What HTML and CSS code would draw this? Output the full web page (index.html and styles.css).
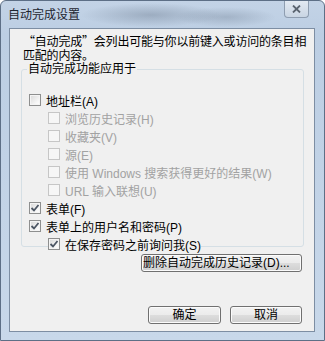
FILE: index.html
```html
<!DOCTYPE html>
<html lang="zh-CN">
<head>
    <meta charset="UTF-8">
    <meta name="viewport" content="width=device-width, initial-scale=1.0">
    <title>自动完成设置</title>
    <link rel="stylesheet" href="styles.css">
</head>
<body>
    <div class="window">
        <div class="titlebar">
            <span class="title">自动完成设置</span>
            <span class="close">
                <svg width="9" height="8" viewBox="0 0 9 8"><path d="M1 0.5 L8 7.5 M8 0.5 L1 7.5" stroke="#5a6470" stroke-width="1.8"/></svg>
            </span>
        </div>
        <div class="client">
            <p class="intro">“自动完成”会列出可能与你以前键入或访问的条目相匹配的内容。</p>
            <fieldset class="group">
                <legend>自动完成功能应用于</legend>
                <div class="opt"><span class="cb"></span>地址栏(A)</div>
                <div class="opt sub off"><span class="cb"></span>浏览历史记录(H)</div>
                <div class="opt sub off"><span class="cb"></span>收藏夹(V)</div>
                <div class="opt sub off"><span class="cb"></span>源(E)</div>
                <div class="opt sub off"><span class="cb"></span>使用 Windows 搜索获得更好的结果(W)</div>
                <div class="opt sub off"><span class="cb"></span>URL 输入联想(U)</div>
                <div class="opt"><span class="cb on"></span>表单(F)</div>
                <div class="opt"><span class="cb on"></span>表单上的用户名和密码(P)</div>
                <div class="opt sub"><span class="cb on"></span>在保存密码之前询问我(S)</div>
            </fieldset>
            <div class="clear-row">
                <button class="btn wide">删除自动完成历史记录(D)...</button>
            </div>
            <div class="actions">
                <button class="btn ok">确定</button>
                <button class="btn cancel">取消</button>
            </div>
        </div>
    </div>
</body>
</html>
```

FILE: styles.css
```css
* {
    margin: 0;
    padding: 0;
    box-sizing: border-box;
}
body {
    width: 325px;
    height: 341px;
    overflow: hidden;
    font-family: "Liberation Sans", "Noto Sans CJK SC", sans-serif;
    font-size: 12px;
    color: #000;
}
.window {
    width: 325px;
    height: 341px;
    display: flex;
    flex-direction: column;
    padding: 0 9px 8px 8px;
    border: 1px solid #5d6f86;
    border-radius: 6px 6px 0 0;
    background:
        radial-gradient(ellipse 70px 12px at 150px 14px, rgba(90, 105, 125, 0.35), transparent),
        radial-gradient(ellipse 50px 10px at 225px 16px, rgba(95, 110, 130, 0.3), transparent),
        linear-gradient(to bottom, #c3d3e6 0%, #bccee3 10%, #c8d8ea 100%);
}
.titlebar {
    height: 27px;
    display: flex;
    align-items: flex-start;
    justify-content: space-between;
}
.title {
    font-family: "Noto Sans CJK SC", sans-serif;
    line-height: 14px;
    margin-top: 6px;
    margin-left: -1px;
    color: #1e2530;
}
.close {
    width: 25px;
    height: 17px;
    margin-right: 6px;
    display: flex;
    align-items: center;
    justify-content: center;
    border: 1px solid #8e9db0;
    border-top: none;
    border-radius: 0 0 4px 4px;
    background: linear-gradient(to bottom, #e2e9f2, #c9d5e3);
}
.client {
    flex: 1;
    display: flex;
    flex-direction: column;
    background: #f0f0f0;
    border: 1px solid #7d8ea3;
}
.intro {
    font-family: "Noto Sans CJK SC", sans-serif;
    margin: 5px 4px 0 13px;
    line-height: 14px;
    letter-spacing: -0.2px;
}
.group {
    margin: 0 10px 0 11px;
    height: 185px;
    padding: 15px 4px 0 5px;
    border: 1px solid #d5dfe5;
    border-radius: 3px;
}
.group legend {
    padding: 0 1px;
    line-height: 14px;
}
.opt {
    height: 18px;
    display: flex;
    align-items: center;
    gap: 5px;
    margin-left: 2px;
}
.opt.sub {
    margin-left: 21px;
    width: max-content;
    background: #f0f0f0;
    position: relative;
}
.opt.off {
    color: #a2a2a2;
}
.cb {
    width: 12px;
    height: 12px;
    flex: none;
    border: 1px solid #8e8f8f;
    background: linear-gradient(135deg, #d8d8d8 0%, #f6f6f6 70%, #fff 100%);
    box-shadow: inset 0 0 0 1px #f4f4f4;
}
.off .cb {
    border-color: #c6c6c6;
    background: #f6f6f6;
    box-shadow: none;
}
.cb.on {
    background:
        url("data:image/svg+xml;utf8,<svg xmlns='http://www.w3.org/2000/svg' width='10' height='10' viewBox='0 0 10 10'><path d='M1.5 5 L4 7.5 L8.5 2' fill='none' stroke='%234b5563' stroke-width='1.8'/></svg>") center / 10px 10px no-repeat,
        linear-gradient(135deg, #d8d8d8 0%, #f6f6f6 70%, #fff 100%);
}
.clear-row {
    display: flex;
    justify-content: flex-end;
    margin: 7px 12px 0 0;
}
.btn {
    height: 18px;
    font-family: inherit;
    font-size: 12px;
    line-height: 14px;
    color: #000;
    border: 1px solid #707070;
    border-radius: 3px;
    background: linear-gradient(to bottom, #f2f2f2 0%, #ebebeb 50%, #dddddd 51%, #cfcfcf 100%);
    box-shadow: inset 0 0 0 1px #fbfbfb;
}
.btn.wide {
    width: 161px;
    text-align: left;
    padding: 0 1px;
}
.actions {
    margin-top: auto;
    margin-bottom: 7px;
    margin-right: 12px;
    display: flex;
    justify-content: flex-end;
    gap: 9px;
}
.btn.ok {
    width: 73px;
}
.btn.cancel {
    width: 72px;
}
```
